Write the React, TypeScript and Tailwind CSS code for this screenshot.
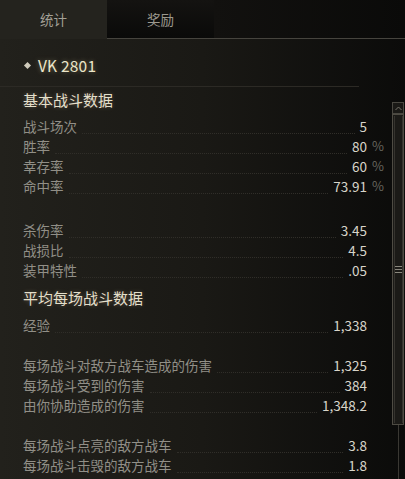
import React from 'react'

type Row = { label: string; value: string; pct?: boolean }

const basic: Row[][] = [
  [
    { label: '战斗场次', value: '5' },
    { label: '胜率', value: '80', pct: true },
    { label: '幸存率', value: '60', pct: true },
    { label: '命中率', value: '73.91', pct: true },
  ],
  [
    { label: '杀伤率', value: '3.45' },
    { label: '战损比', value: '4.5' },
    { label: '装甲特性', value: '.05' },
  ],
]

const average: Row[][] = [
  [{ label: '经验', value: '1,338' }],
  [
    { label: '每场战斗对敌方战车造成的伤害', value: '1,325' },
    { label: '每场战斗受到的伤害', value: '384' },
    { label: '由你协助造成的伤害', value: '1,348.2' },
  ],
  [
    { label: '每场战斗点亮的敌方战车', value: '3.8' },
    { label: '每场战斗击毁的敌方战车', value: '1.8' },
  ],
]

function StatRow({ row }: { row: Row }) {
  return (
    <div className="flex h-5 items-center text-[13.5px] leading-5">
      <span className="text-[#918f87] whitespace-nowrap">{row.label}</span>
      <span className="flex-1 self-end mb-[2px] mx-[5px] border-b border-dotted border-[#302e29]" />
      <span className="text-[#d8d5ca] whitespace-nowrap">{row.value}</span>
      <span className="w-[18px] pl-[5px] text-[#67655e] text-[13px]">{row.pct ? '%' : ''}</span>
    </div>
  )
}

function SectionTitle({ children }: { children: React.ReactNode }) {
  return (
    <div className="h-[26px] flex items-center text-[15px] text-[#e4dfca] [text-shadow:0_0_4px_rgba(255,240,200,0.25)]">
      {children}
    </div>
  )
}

export default function App() {
  return (
    <div
      className="relative w-[405px] h-[479px] overflow-hidden bg-gradient-to-r from-[#22211c] via-[#1a1915] to-[#0b0b0a]"
      style={{ fontFamily: "'Noto Sans CJK SC', 'Noto Sans', sans-serif" }}
    >
      {/* tabs */}
      <div className="flex h-[39px]">
        <div className="w-[107px] flex items-center justify-center text-[13.5px] text-[#a3a096] bg-[#24231e]">
          统计
        </div>
        <div className="w-[107px] flex items-center justify-center text-[13.5px] text-[#9c998f] bg-gradient-to-b from-[#141311] to-[#0a0a09] border-b border-[#46443e]">
          奖励
        </div>
        <div className="flex-1 bg-gradient-to-r from-[#12110f] to-[#0a0a09] border-b border-[#46443e]" />
      </div>

      <div className="flex">
        <div className="flex-1">
          {/* vehicle name */}
          <div className="h-[48px] mr-[33px] flex items-center gap-[8px] pl-[25px] pt-[6px] border-b border-[#2c2a25]">
            <span className="w-[5px] h-[5px] rotate-45 bg-[#cfcabb]" />
            <span className="text-[15.5px] tracking-[0.2px] text-[#ece6c9] [text-shadow:0_0_5px_rgba(255,240,190,0.35)]">VK 2801</span>
          </div>

          <div className="pl-[23px] pr-[7px]">
            <SectionTitle>基本战斗数据</SectionTitle>
            <div className="mt-[3px] flex flex-col gap-[24px]">
              {basic.map((group, i) => (
                <div key={i}>
                  {group.map((r) => (
                    <StatRow key={r.label} row={r} />
                  ))}
                </div>
              ))}
            </div>

            <div className="mt-[5px]">
              <SectionTitle>平均每场战斗数据</SectionTitle>
            </div>
            <div className="mt-[4px] flex flex-col gap-[20px]">
              {average.map((group, i) => (
                <div key={i}>
                  {group.map((r) => (
                    <StatRow key={r.label} row={r} />
                  ))}
                </div>
              ))}
            </div>
          </div>
        </div>

        {/* scrollbar */}
        <div className="w-[12px] mr-[1px] mt-[63px] flex flex-col items-center">
          <div className="w-[12px] h-[12px] border border-[#4a4841] bg-[#1a1916] flex items-center justify-center">
            <svg width="7" height="5" viewBox="0 0 7 5" fill="none">
              <path d="M0.5 4 L3.5 1 L6.5 4" stroke="#77746b" strokeWidth="1" />
            </svg>
          </div>
          <div className="w-[12px] h-[311px] border border-[#4e4b43] bg-[#1b1a17] p-[1px] flex">
            <div className="flex-1 border-x border-[#35332e] flex items-center justify-center">
              <div className="flex flex-col gap-[2px]">
                <span className="block w-[7px] h-[1px] bg-[#8a877d]" />
                <span className="block w-[7px] h-[1px] bg-[#8a877d]" />
                <span className="block w-[7px] h-[1px] bg-[#8a877d]" />
              </div>
            </div>
          </div>
          <div className="w-[1px] h-[60px] bg-[#3a3833]" />
        </div>
      </div>
    </div>
  )
}
